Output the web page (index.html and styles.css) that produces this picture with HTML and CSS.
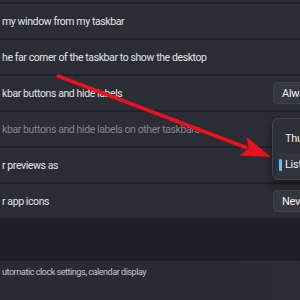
FILE: index.html
```html
<!DOCTYPE html>
<html lang="en">
<head>
    <meta charset="UTF-8">
    <meta name="viewport" content="width=device-width, initial-scale=1.0">
    <title>Taskbar behaviors</title>
    <link rel="stylesheet" href="styles.css">
</head>
<body>
    <div class="wrap">
        <!-- settings list -->
        <div class="list">
            <div class="row"><span class="lbl"></span></div>
            <div class="row"><span class="lbl">my window from my taskbar</span></div>
            <div class="row"><span class="lbl">he far corner of the taskbar to show the desktop</span></div>
            <div class="row">
                <span class="lbl">kbar buttons and hide labels</span>
                <span class="btn">Always</span>
            </div>
            <div class="row off">
                <span class="lbl">kbar buttons and hide labels on other taskbars</span>
            </div>
            <div class="row"><span class="lbl">r previews as</span></div>
            <div class="row">
                <span class="lbl">r app icons</span>
                <span class="btn">Never</span>
            </div>
            <div class="band"></div>
            <div class="row last">
                <span class="sub">utomatic clock settings, calendar display</span>
            </div>
        </div>

        <!-- dropdown popup -->
        <div class="menu">
            <div class="item">Thumbnails</div>
            <div class="item sel">List</div>
        </div>

        <!-- red arrow -->
        <svg class="arrow" width="300" height="300" viewBox="0 0 300 300">
            <line x1="58" y1="76" x2="246" y2="147.5" stroke="#e8111d" stroke-width="3.5" stroke-linecap="round"></line>
            <polygon points="271,157 246.6,137 248.6,148.4 239.4,155.6" fill="#e8111d"></polygon>
        </svg>
    </div>
</body>
</html>
```
FILE: styles.css
```css
html,body{
    margin: 0;
    padding: 0;
}
body{
    width: 300px;
    height: 300px;
    overflow: hidden;
    background: #1f2128;
    font-family: Roboto, "Noto Sans", sans-serif;
}
.wrap{
    position: relative;
    width: 300px;
    height: 300px;
    overflow: hidden;
}
/* list wider than the window, cut on the right */
.list{
    display: flex;
    flex-direction: column;
    gap: 2px;
    width: 390px;
    margin-top: -32px;
}
.row{
    display: flex;
    align-items: center;
    justify-content: space-between;
    height: 34px;
    padding-left: 2px;
    padding-right: 17px;
    background: #2b2d35;
}
.lbl{
    font-size: 10.5px;
    letter-spacing: -0.4px;
    color: #e2e3e6;
    white-space: nowrap;
}
.off .lbl{
    color: #83858b;
}
.btn{
    box-sizing: border-box;
    width: 100px;
    height: 22px;
    padding: 0 8px;
    line-height: 21px;
    font-size: 11px;
    letter-spacing: -0.3px;
    color: #f2f2f4;
    background: #363840;
    border: 1px solid #3f414a;
    border-radius: 4px;
}
.band{
    height: 39px;
    background: #1c1f2a;
}
.last{
    height: 44px;
    align-items: flex-start;
    background: linear-gradient(to right, #2a2b32 60%, #303137);
}
.sub{
    margin-top: 6px;
    font-size: 9px;
    letter-spacing: -0.45px;
    color: #c4c5ca;
    white-space: nowrap;
}

/* popup */
.menu{
    position: absolute;
    left: 272px;
    top: 118px;
    width: 90px;
    height: 62px;
    box-sizing: border-box;
    padding: 6px 4px;
    background: #2d2f37;
    border: 1px solid #40424b;
    border-radius: 6px;
    box-shadow: 0 4px 10px rgba(0,0,0,.45);
}
.item{
    position: relative;
    height: 24px;
    margin-top: 2px;
    padding-left: 8px;
    line-height: 24px;
    font-size: 11px;
    letter-spacing: -0.3px;
    color: #eeeef0;
    border-radius: 4px;
}
.sel{
    background: #33353d;
}
.sel::before{
    content: "";
    position: absolute;
    left: 2px;
    top: 6px;
    width: 3px;
    height: 12px;
    border-radius: 2px;
    background: #5fc4f5;
}

.arrow{
    position: absolute;
    left: 0;
    top: 0;
}
```
